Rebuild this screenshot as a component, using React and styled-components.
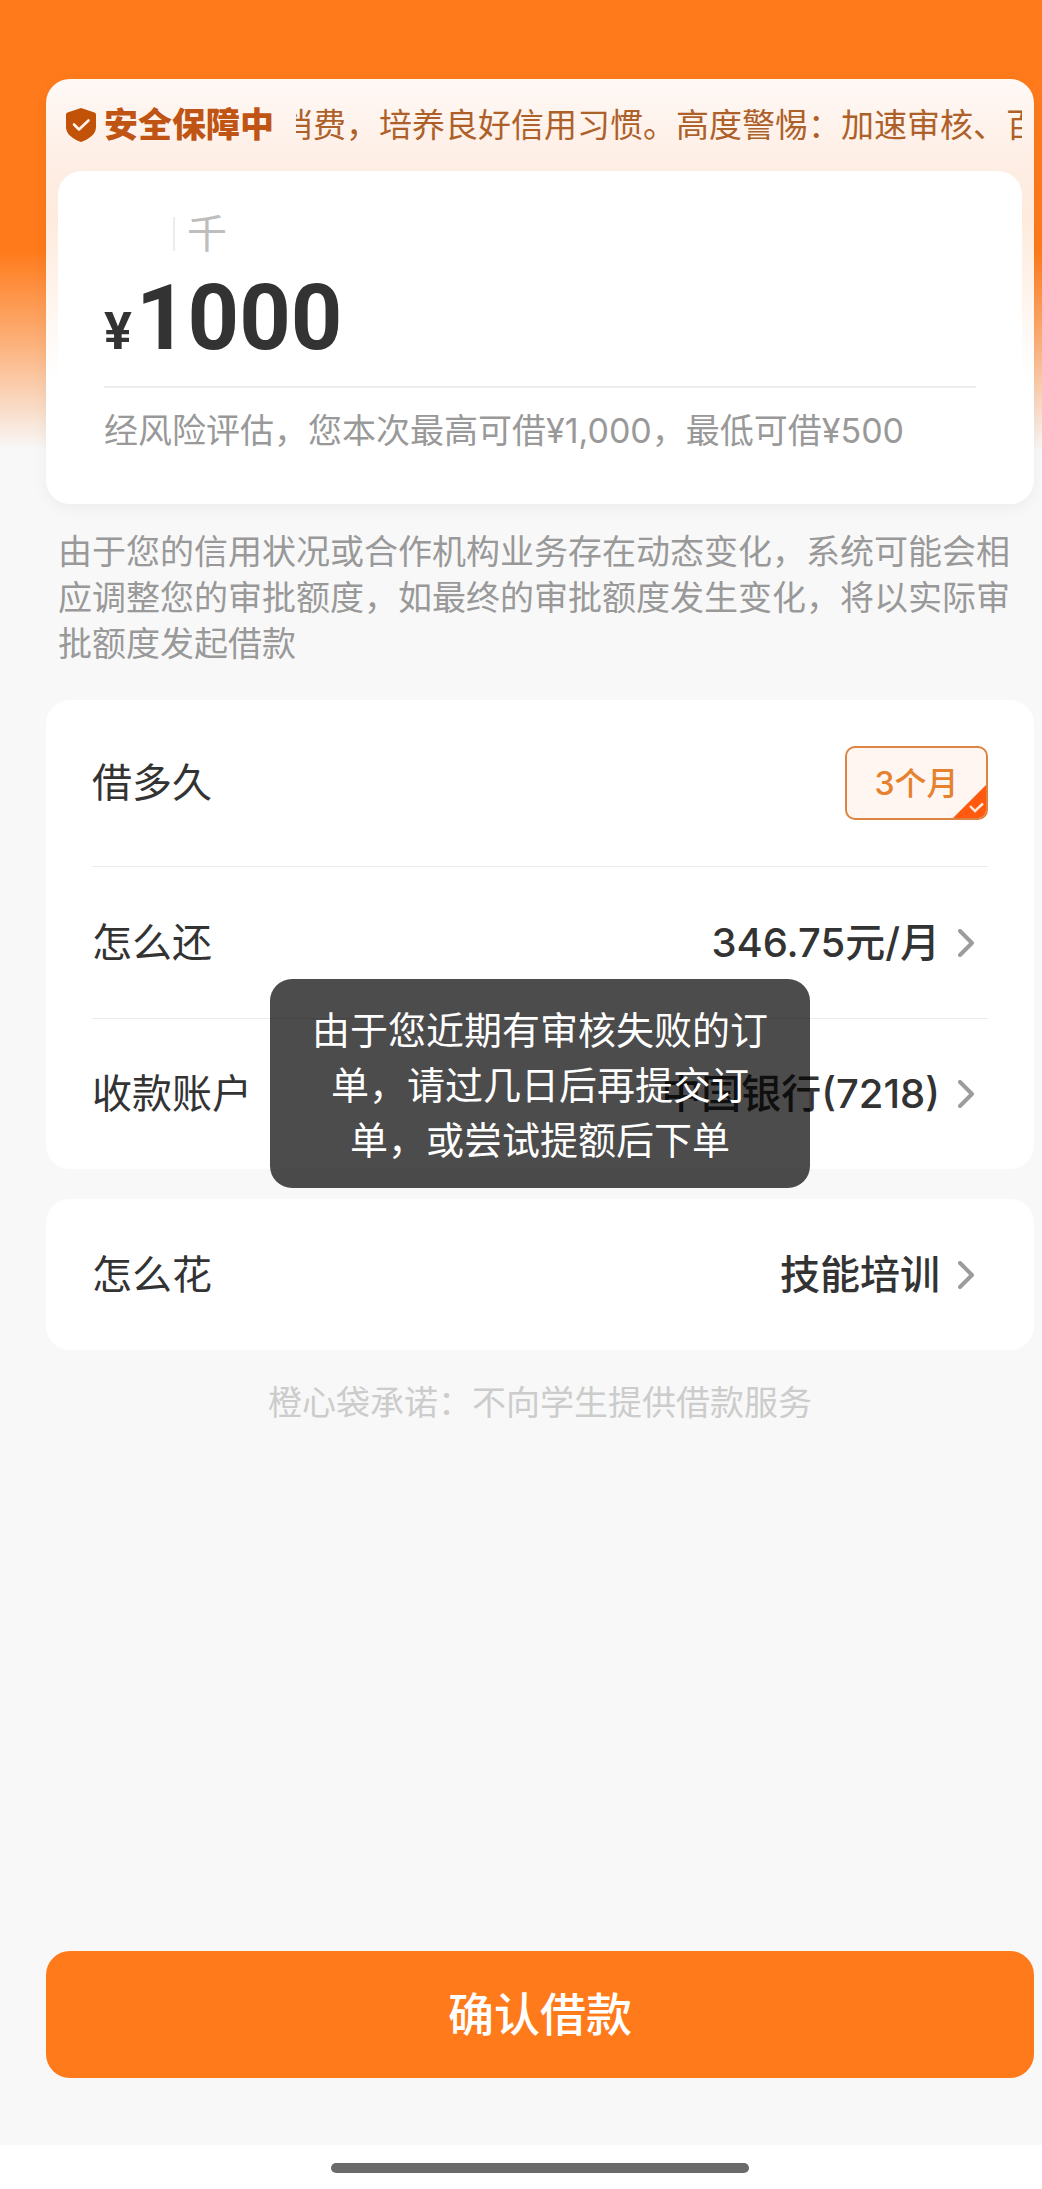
import React, { useState } from "react";
import styled, { createGlobalStyle } from "styled-components";

const GlobalStyle = createGlobalStyle`
  * {
    box-sizing: border-box;
  }
  body {
    margin: 0;
    background-color: #f8f8f8;
    color: #333;
    font-family: Inter, "Noto Sans CJK SC", sans-serif;
  }
  button {
    border: none;
    background: none;
    padding: 0;
    font-family: inherit;
    color: inherit;
    cursor: pointer;
  }
`;

const Page = styled.div`
  min-height: 100vh;
  display: flex;
  flex-direction: column;
  background: linear-gradient(
    #ff7a1a 0,
    #ff7a1a 250px,
    #fcb27c 345px,
    #f8f8f8 450px
  );
`;

const Main = styled.main`
  flex: 1;
  display: flex;
  flex-direction: column;
  padding: 79px 8px 67px 46px;
`;

const AmountCard = styled.section`
  padding: 0 12px;
  border-radius: 24px;
  background: linear-gradient(
    #fff9f6 0,
    #feede3 92px,
    #feebdd 140px,
    #fff 300px
  );
  box-shadow: 0 4px 16px rgba(0, 0, 0, 0.05);
`;

const SafetyBar = styled.div`
  display: flex;
  align-items: center;
  height: 92px;
  padding-left: 8px;
`;

const SafetyTitle = styled.strong`
  margin: 0 22px 0 8px;
  font-size: 34px;
  font-weight: 900;
  line-height: 46px;
  white-space: nowrap;
  color: #bf5414;
`;

const Marquee = styled.div`
  flex: 1;
  min-width: 0;
  overflow: hidden;
  white-space: nowrap;
  text-indent: -16px;
  font-size: 33px;
  line-height: 46px;
  color: #ae6029;
`;

const AmountBody = styled.div`
  padding: 43px 46px 50px;
  border-radius: 24px;
  background-color: #fff;
`;

const Unit = styled.div`
  display: flex;
  align-items: center;
  gap: 12px;
  margin-left: 69px;
  height: 40px;
  font-size: 40px;
  line-height: 40px;
  color: #bdbdbd;

  &::before {
    content: "";
    width: 2px;
    height: 34px;
    background-color: #ececec;
  }
`;

const Amount = styled.div`
  display: flex;
  align-items: baseline;
  gap: 4px;
  height: 134px;
  border-bottom: 2px solid #ededed;
  font-family: Roboto, sans-serif;
  font-size: 90px;
  font-weight: 700;
  line-height: 130px;
`;

const Currency = styled.span`
  font-size: 52px;
`;

const Limit = styled.p`
  margin: 20px 0 0;
  font-size: 34px;
  line-height: 46px;
  color: #999;
`;

const Note = styled.p`
  margin: 25px 12px 33px;
  font-size: 34px;
  line-height: 46px;
  color: #999;
`;

const Group = styled.div`
  position: relative;
`;

const Card = styled.section`
  margin-bottom: 30px;
  padding: 0 46px;
  border-radius: 24px;
  background-color: #fff;
`;

const rowStyles = `
  display: flex;
  align-items: center;
  width: 100%;
  font-size: 40px;
  line-height: 54px;
  text-align: left;
`;

const TermRow = styled.div`
  ${rowStyles}
  height: 167px;
  border-bottom: 1px solid #ebebeb;
`;

const LinkRow = styled.button`
  ${rowStyles}
  height: 151px;
  padding-right: 14px;

  & + & {
    border-top: 1px solid #ebebeb;
  }
`;

const Label = styled.span`
  flex: 1;
`;

const Value = styled.span`
  margin-right: 18px;
  font-weight: 500;
`;

const Chip = styled.label`
  position: relative;
  display: flex;
  align-items: center;
  justify-content: center;
  width: 143px;
  height: 74px;
  padding-top: 2px;
  border: 2px solid #dd8442;
  border-radius: 10px;
  overflow: hidden;
  background-color: #fff5f1;
  color: #e5812f;
  font-size: 32px;
  font-weight: 500;
  cursor: pointer;
`;

const ChipInput = styled.input`
  position: absolute;
  opacity: 0;
`;

const ChipCorner = styled.svg`
  position: absolute;
  right: 0;
  bottom: 0;
`;

const Toast = styled.div`
  position: absolute;
  top: 279px;
  left: 50%;
  width: 540px;
  padding: 24px 34px 20px;
  transform: translateX(-50%);
  border-radius: 22px;
  background-color: rgba(0, 0, 0, 0.7);
  color: #fff;
  font-size: 38px;
  line-height: 55px;
  text-align: center;
`;

const Pledge = styled.p`
  margin: 0;
  font-size: 34px;
  line-height: 46px;
  text-align: center;
  color: #ccc;
`;

const Submit = styled.button`
  height: 127px;
  margin-top: auto;
  && {
    padding-bottom: 8px;
    background-color: #ff7a1a;
    color: #fff;
  }
  border-radius: 24px;
  font-size: 46px;
  font-weight: 500;
`;

const NavBar = styled.footer`
  display: flex;
  align-items: center;
  justify-content: center;
  height: 44px;
  padding: 2px 8px 0 46px;
  background-color: #fff;
`;

const NavHandle = styled.div`
  width: 418px;
  height: 10px;
  border-radius: 5px;
  background-color: #6a6a6a;
`;

const Shield = () => (
  <svg width="30" height="34" viewBox="0 0 30 34" aria-hidden="true">
    <path
      d="M15 0 L28.5 4.4 Q30 5 30 6.6 V19 C30 26 24 30.5 15 34 C6 30.5 0 26 0 19 V6.6 Q0 5 1.5 4.4 Z"
      fill="#c25208"
    />
    <path
      d="M8 16.5 L13 21.5 L22.5 12.5"
      fill="none"
      stroke="#fff3ec"
      strokeWidth="2.6"
      strokeLinecap="round"
      strokeLinejoin="round"
    />
  </svg>
);

const Chevron = () => (
  <svg width="16" height="28" viewBox="0 0 16 28" aria-hidden="true">
    <path
      d="M2 2 L14 14 L2 26"
      fill="none"
      stroke="#9c9c9c"
      strokeWidth="4"
      strokeLinecap="round"
      strokeLinejoin="round"
    />
  </svg>
);

const Row = ({ label, value }) => (
  <LinkRow type="button">
    <Label>{label}</Label>
    <Value>{value}</Value>
    <Chevron />
  </LinkRow>
);

const App = () => {
  const [term, setTerm] = useState("3");

  return (
    <>
      <GlobalStyle />
      <Page>
        <Main>
          <AmountCard>
            <SafetyBar>
              <Shield />
              <SafetyTitle>安全保障中</SafetyTitle>
              <Marquee>
                消费，培养良好信用习惯。高度警惕：加速审核、百
              </Marquee>
            </SafetyBar>
            <AmountBody>
              <Unit>千</Unit>
              <Amount>
                <Currency>¥</Currency>
                <span>1000</span>
              </Amount>
              <Limit>经风险评估，您本次最高可借¥1,000，最低可借¥500</Limit>
            </AmountBody>
          </AmountCard>

          <Note>
            由于您的信用状况或合作机构业务存在动态变化，系统可能会相应调整您的审批额度，如最终的审批额度发生变化，将以实际审批额度发起借款
          </Note>

          <Group>
            <Card>
              <TermRow>
                <Label>借多久</Label>
                <Chip>
                  <ChipInput
                    type="radio"
                    name="term"
                    value="3"
                    checked={term === "3"}
                    onChange={(e) => setTerm(e.target.value)}
                  />
                  3个月
                  <ChipCorner width="33" height="33" viewBox="0 0 33 33">
                    <path d="M33 0 V33 H0 Z" fill="#ff5a0f" />
                    <path
                      d="M17 21 L22 26 L30 18.5"
                      fill="none"
                      stroke="#ffe9dd"
                      strokeWidth="2.4"
                    />
                  </ChipCorner>
                </Chip>
              </TermRow>
              <Row label="怎么还" value="346.75元/月" />
              <Row label="收款账户" value="中国银行(7218)" />
            </Card>
            <Toast role="status">
              由于您近期有审核失败的订单，请过几日后再提交订单，或尝试提额后下单
            </Toast>
          </Group>

          <Card>
            <Row label="怎么花" value="技能培训" />
          </Card>

          <Pledge>橙心袋承诺：不向学生提供借款服务</Pledge>

          <Submit type="button">确认借款</Submit>
        </Main>
        <NavBar>
          <NavHandle />
        </NavBar>
      </Page>
    </>
  );
};

export default App;
